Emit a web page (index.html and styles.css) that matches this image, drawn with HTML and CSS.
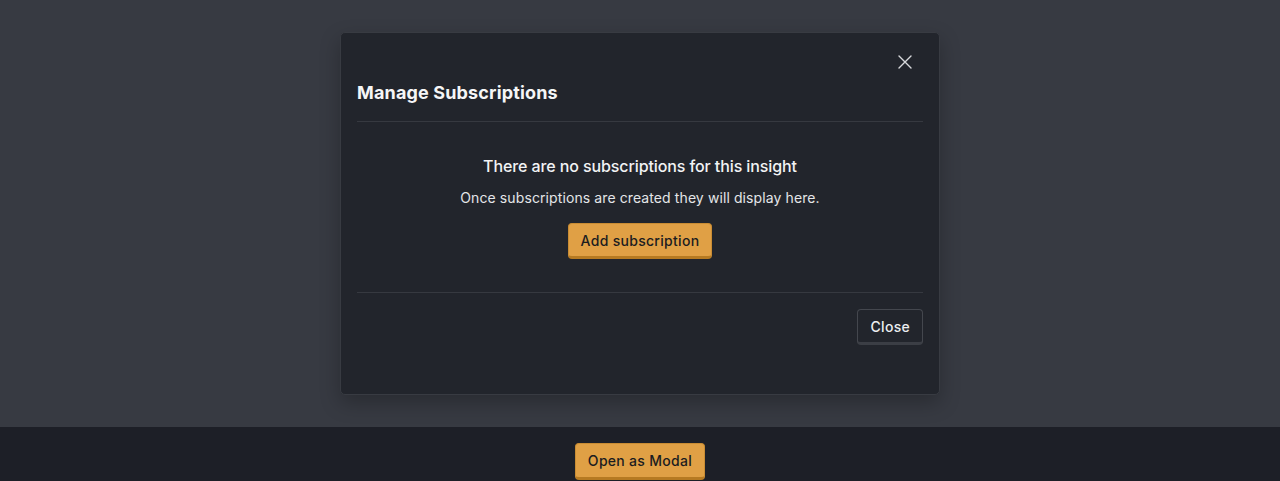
FILE: index.html
```html
<!DOCTYPE html>
<html>
<head>
<meta charset="utf-8">
<link rel="stylesheet" href="styles.css">
</head>
<body>
<div class="stage">
  <div class="modal">
    <div class="modal-header">
      <button class="icon-close" aria-label="Close">
        <svg width="14" height="14" viewBox="0 0 14 14"><path d="M1 1L13 13M13 1L1 13" stroke="#d8d9dc" stroke-width="1.4" stroke-linecap="round"/></svg>
      </button>
      <h2 class="title">Manage Subscriptions</h2>
    </div>
    <div class="modal-body">
      <div class="empty-title">There are no subscriptions for this insight</div>
      <div class="empty-sub">Once subscriptions are created they will display here.</div>
      <button class="btn btn-primary">Add subscription</button>
    </div>
    <div class="modal-footer">
      <button class="btn btn-secondary">Close</button>
    </div>
  </div>
</div>
<div class="bottom">
  <button class="btn btn-primary btn-open">Open as Modal</button>
</div>
</body>
</html>
```

FILE: styles.css
```css
* { box-sizing: border-box; }
html, body { margin: 0; padding: 0; }
body {
  font-family: Inter, "Noto Sans", sans-serif;
  background: #1d1f27;
  color: #f2f3f5;
  height: 481px;
  overflow: hidden;
}
.stage {
  height: 427px;
  background: #373a42;
  display: flex;
  justify-content: center;
  padding-top: 32px;
}
.modal {
  width: 600px;
  height: 363px;
  background: #22252c;
  border: 1px solid #383b42;
  border-radius: 5px;
  box-shadow: 0 8px 20px rgba(0,0,0,0.25);
  padding: 15px 16px 0 16px;
  display: flex;
  flex-direction: column;
}
.modal-header {
  position: relative;
  padding-top: 33px;
  padding-bottom: 16px;
  border-bottom: 1px solid #363940;
}
.icon-close {
  position: absolute;
  top: 0;
  right: 4px;
  width: 28px;
  height: 28px;
  background: transparent;
  border: 0;
  padding: 0;
  display: flex;
  align-items: center;
  justify-content: center;
  cursor: pointer;
}
.title {
  margin: 0;
  font-size: 18px;
  line-height: 24px;
  font-weight: 700;
  letter-spacing: 0.15px;
  color: #f5f6f7;
}
.modal-body {
  display: flex;
  flex-direction: column;
  align-items: center;
  padding-top: 32px;
  padding-bottom: 33px;
  border-bottom: 1px solid #363940;
}
.empty-title {
  font-size: 16px;
  line-height: 24px;
  font-weight: 500;
  letter-spacing: -0.1px;
  color: #f2f3f5;
}
.empty-sub {
  margin-top: 10px;
  font-size: 14px;
  line-height: 20px;
  letter-spacing: 0.1px;
  color: #e4e5e8;
}
.btn {
  font-family: Inter, "Noto Sans", sans-serif;
  font-size: 14px;
  font-weight: 500;
  letter-spacing: 0.3px;
  height: 36px;
  border-radius: 4px;
  padding: 0 12px;
  cursor: pointer;
  line-height: 20px;
}
.btn-primary {
  margin-top: 15px;
  background: #e0a045;
  color: #1b1c20;
  border: 1px solid #c98c33;
  border-bottom: 3px solid #b67a22;
  padding-top: 1px;
}
.modal-footer {
  display: flex;
  justify-content: flex-end;
  padding-top: 16px;
}
.btn-secondary {
  background: #22252c;
  color: #eceef0;
  border: 1px solid #44474e;
  border-bottom: 3px solid #3b3e45;
  padding-top: 1px;
}
.bottom {
  height: 54px;
  display: flex;
  justify-content: center;
  padding-top: 16px;
}
.btn-open {
  margin-top: 0;
  height: 37px;
}
```
